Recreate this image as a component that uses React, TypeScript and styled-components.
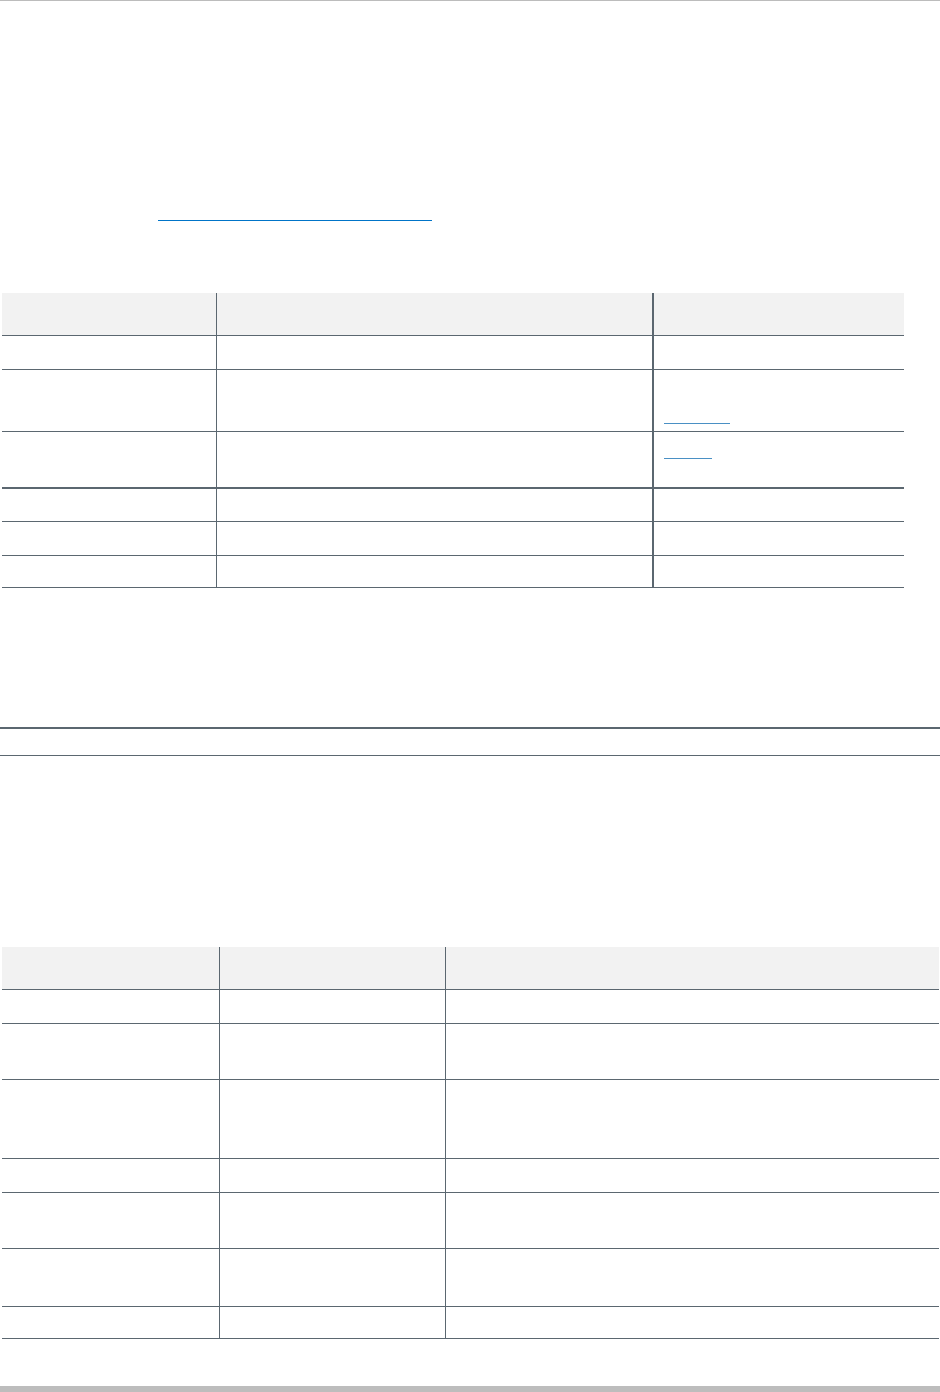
import React from 'react';
import styled, { createGlobalStyle } from 'styled-components';

const Colors = {
    rule: '#5b6770',
    topRule: '#bcbcbc',
    headBg: '#f2f2f2',
    linkStrong: '#0074c8',
    link: '#4a90c4',
    footer: '#bdbdbd',
};

const GlobalStyle = createGlobalStyle`
    html, body {
        margin: 0;
        padding: 0;
        background: #ffffff;
        font-family: 'Open Sans', 'Liberation Sans', Arial, sans-serif;
        font-size: 14px;
        color: #333333;
    }
    * {
        box-sizing: border-box;
    }
`;

const Page = styled.div`
    width: 940px;
    border-top: 1px solid ${Colors.topRule};
`;

const Intro = styled.section`
    padding-left: 158px;
    height: 220px;
    display: flex;
    align-items: flex-end;
`;

const LeadLink = styled.a`
    display: block;
    width: 274px;
    height: 16px;
    border-bottom: 1px solid ${Colors.linkStrong};
`;

const Table = styled.div<{ $top: number; $width: number }>`
    margin-top: ${p => p.$top}px;
    margin-left: 2px;
    width: ${p => p.$width}px;
    display: flex;
    flex-direction: column;
`;

const Row = styled.div<{ $height: number; $cols: string; $head?: boolean; $thick?: boolean }>`
    display: grid;
    grid-template-columns: ${p => p.$cols};
    height: ${p => p.$height}px;
    background: ${p => (p.$head ? Colors.headBg : 'transparent')};
    border-bottom: ${p => (p.$thick ? 2 : 1)}px solid ${Colors.rule};
`;

const Cell = styled.div<{ $divider?: number }>`
    padding: 0 10px;
    border-right: ${p => p.$divider || 0}px solid ${Colors.rule};
`;

const CellLink = styled.a<{ $width: number; $offset: number }>`
    display: block;
    width: ${p => p.$width}px;
    height: 12px;
    margin-top: ${p => p.$offset}px;
    border-bottom: 1px solid ${Colors.link};
`;

const SectionBar = styled.div`
    margin-top: 139px;
    height: 29px;
    border-top: 2px solid ${Colors.rule};
    border-bottom: 1px solid ${Colors.rule};
`;

const Footer = styled.footer`
    margin-top: 47px;
    height: 6px;
    background: ${Colors.footer};
`;

interface RowSpec {
    height: number;
    thick?: boolean;
    link?: { width: number; offset: number };
}

const specsTable: RowSpec[] = [
    { height: 34 },
    { height: 62, link: { width: 66, offset: 42 } },
    { height: 57, thick: true, link: { width: 48, offset: 15 } },
    { height: 33 },
    { height: 34 },
    { height: 32 },
];

const optionsTable: RowSpec[] = [
    { height: 34 },
    { height: 56 },
    { height: 79 },
    { height: 34 },
    { height: 56 },
    { height: 58 },
    { height: 32 },
];

const SpecsTable = (): JSX.Element => {
    const cols = '215px 437px 250px';
    return (
        <Table $top={72} $width={902}>
            <Row $head $height={43} $cols={cols}>
                <Cell $divider={1} />
                <Cell $divider={2} />
                <Cell />
            </Row>
            {specsTable.map((row, i) => (
                <Row key={i} $height={row.height} $cols={cols} $thick={row.thick}>
                    <Cell $divider={1} />
                    <Cell $divider={2} />
                    <Cell>
                        {row.link && (
                            <CellLink
                                href="#"
                                $width={row.link.width}
                                $offset={row.link.offset}
                            />
                        )}
                    </Cell>
                </Row>
            ))}
        </Table>
    );
};

const OptionsTable = (): JSX.Element => {
    const cols = '218px 226px 493px';
    return (
        <Table $top={191} $width={937}>
            <Row $head $height={43} $cols={cols}>
                <Cell $divider={1} />
                <Cell $divider={1} />
                <Cell />
            </Row>
            {optionsTable.map((row, i) => (
                <Row key={i} $height={row.height} $cols={cols}>
                    <Cell $divider={1} />
                    <Cell $divider={1} />
                    <Cell />
                </Row>
            ))}
        </Table>
    );
};

const App = (): JSX.Element => (
    <>
        <GlobalStyle />
        <Page>
            <Intro>
                <LeadLink href="#" />
            </Intro>
            <SpecsTable />
            <SectionBar />
            <OptionsTable />
            <Footer />
        </Page>
    </>
);

export default App;
